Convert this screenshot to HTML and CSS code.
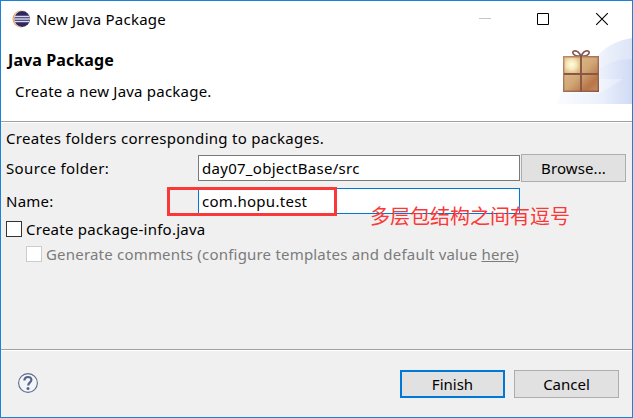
FILE: index.html
```
<!DOCTYPE html>
<html lang="en">
<head>
<meta charset="utf-8">
<title>New Java Package</title>
<link rel="stylesheet" href="styles.css">
</head>
<body>
<main class="dialog">
  <header class="banner">
    <div class="titlebar">
      <svg class="logo" width="19" height="18" viewBox="0 0 19 18">
        <circle cx="9" cy="9" r="8.5" fill="#f0a45a"/>
        <circle cx="10" cy="9" r="8.3" fill="#fff"/>
        <circle cx="10.2" cy="9" r="7.9" fill="#30285d"/>
        <path d="M3 6.5h14.5M2.3 9h15.8M3 11.5h14.5" stroke="#d8d8ee" stroke-width="1.3"/>
      </svg>
      <span class="title">New Java Package</span>
      <svg class="controls" width="130" height="14" viewBox="0 0 130 14">
        <path d="M0 6.5h12" stroke="#c5c5c5"/>
        <path d="M58.5 1.5h11v11h-11z" fill="none" stroke="#000"/>
        <path d="M117.2 1.2l11.6 11.6M128.8 1.2L117.2 12.8" stroke="#000" stroke-width="1.1"/>
      </svg>
    </div>
    <h1 class="heading">Java Package</h1>
    <p class="message">Create a new Java package.</p>
    <svg class="art" width="75" height="66" viewBox="0 0 75 66">
      <defs>
        <linearGradient id="sky" x1="0" x2="1"><stop offset="0" stop-color="#fafcff"/><stop offset=".55" stop-color="#f0f4fc"/><stop offset="1" stop-color="#dce5f7"/></linearGradient>
        <linearGradient id="swoosh" gradientUnits="userSpaceOnUse" x1="0" x2="75" y1="0" y2="0"><stop offset="0" stop-color="#fafcff"/><stop offset=".6" stop-color="#e9effb"/><stop offset="1" stop-color="#ccd8f3"/></linearGradient>
        <linearGradient id="box" x1="0" y1="0" x2="1" y2="1"><stop offset="0" stop-color="#e2c58c"/><stop offset=".5" stop-color="#d1a777"/><stop offset=".78" stop-color="#b87548"/><stop offset="1" stop-color="#c59068"/></linearGradient>
        <radialGradient id="shine" cx=".24" cy=".24" r=".34"><stop offset="0" stop-color="#fffce9"/><stop offset=".4" stop-color="#f5e6b6"/><stop offset="1" stop-color="#e2c58c" stop-opacity="0"/></radialGradient>
        <linearGradient id="edge" x1="0" y1="0" x2="1" y2="1"><stop offset="0" stop-color="#bd8967"/><stop offset="1" stop-color="#8d5844"/></linearGradient>
      </defs>
      <path d="M0 66C2 54 9 48 22 44C36 19 49 4 75 0V66z" fill="url(#sky)"/>
      <path d="M43 31C52 24 62 21 75 21V66H0C2 58 6 56 14 54H43z" fill="url(#swoosh)" opacity=".8"/>
      <path d="M42 41H66L42 56H12V52H42z" fill="#fff" opacity=".3"/>
      <path d="M23 18C17 19 14 14 17 13C20 12 23 15 24 19C25 15 28 12 31 13C34 14 31 19 25 18" fill="none" stroke="#85594f" stroke-width="1.7"/>
      <path d="M6 18h36v36H6z" fill="url(#box)"/>
      <path d="M6 18h36v36H6z" fill="url(#shine)"/>
      <path d="M6.7 18.7h34.6v34.6H6.7z" fill="none" stroke="url(#edge)" stroke-width="1.4"/>
      <path d="M24 18v36M7 36h34" stroke="#885745" stroke-width="1.9"/>
    </svg>
  </header>
  <section class="content">
    <p class="intro">Creates folders corresponding to packages.</p>
    <div class="row source"><label class="label l-source">Source folder:</label><div class="field">day07_objectBase/src</div><button class="button browse">Browse...</button></div>
    <div class="row name"><label class="label">Name:</label><div class="field focused">com.hopu.test</div></div>
    <div class="check"><span class="box"></span><span>Create package-info.java</span></div>
    <div class="check disabled"><span class="box"></span><span>Generate comments (configure templates and default value <u>here</u>)</span></div>
    <div class="mark"></div>
    <div class="note">多层包结构之间有逗号</div>
  </section>
  <footer class="footer">
    <svg class="help" width="20" height="20" viewBox="0 0 20 20">
      <circle cx="10" cy="10" r="9.4" fill="#f4f5f8" stroke="#5a6b8d" stroke-width="1.1"/>
      <path d="M6.4 7.5C6.3 2.8 13.6 3 13.4 7C13.3 9.4 10.2 9.5 10.2 12.6" fill="none" stroke="#52648a" stroke-width="2.2"/>
      <circle cx="10" cy="15.5" r="1.5" fill="#52648a"/>
    </svg>
    <button class="button finish">Finish</button>
    <button class="button cancel">Cancel</button>
  </footer>
</main>
</body>
</html>
```
FILE: styles.css
```
* { box-sizing: border-box; }
body { margin: 0; font: 15px/20px "Noto Sans", "Open Sans", sans-serif; color: #000; }
h1, p { margin: 0; }
.dialog { width: 633px; height: 418px; display: flex; flex-direction: column; border: 1px solid #1a83d7; background: #f0f0f0; white-space: nowrap; overflow: hidden; letter-spacing: .25px; }
.banner { position: relative; height: 121px; flex: none; background: #fff; border-bottom: 1px solid #a0a0a0; }
.titlebar { height: 36px; display: flex; align-items: center; padding: 0 23px 0 11px; }
.title { margin-left: 5px; letter-spacing: .21px; }
.controls { margin-left: auto; }
.heading { font-size: 16px; line-height: 22px; padding: 12px 0 0 7px; letter-spacing: .1px; }
.message { padding: 10px 0 0 14px; letter-spacing: .22px; }
.art { position: absolute; right: 0; top: 37px; }
.content { position: relative; height: 228px; flex: none; padding: 5px 5px 0; border-top: 1px solid #fff; border-bottom: 1px solid #a0a0a0; }
.intro { height: 26px; letter-spacing: .29px; }
.row { display: flex; align-items: center; }
.source { height: 28px; }
.name { height: 26px; margin-top: 6px; }
.label { width: 192px; }
.l-source { letter-spacing: .36px; }
.field { width: 322px; height: 26px; background: #fff; border: 1px solid #7a7a7a; padding: 2px 3px; margin-right: 1px; letter-spacing: .28px; }
.focused { border-color: #0078d7; }
.button { font: inherit; width: 105px; height: 28px; padding: 0; border: 1px solid #adadad; background: #e1e1e1; color: #000; letter-spacing: 0; }
.browse { letter-spacing: .1px; }
.check { display: flex; align-items: center; height: 18px; margin-top: 6px; gap: 4px; }
.box { width: 16px; height: 16px; border: 1px solid #333; background: #fff; }
.disabled { margin-top: 7px; padding-left: 20px; color: #7b7b7b; letter-spacing: .2px; }
.disabled .box { border-color: #ccc; }
.mark { position: absolute; left: 166px; top: 64px; width: 170px; height: 29px; border: 3px solid #fb3838; }
.note { position: absolute; left: 369px; top: 79px; font: 20px/28px "Noto Sans CJK SC", sans-serif; letter-spacing: 0; color: #fb3838; }
.footer { flex: 1; display: flex; align-items: flex-start; padding: 19px 13px 0 17px; border-top: 1px solid #fff; }
.help { margin: 3px auto 0 0; }
.finish { border: 2px solid #0078d7; margin-right: 9px; }
```
